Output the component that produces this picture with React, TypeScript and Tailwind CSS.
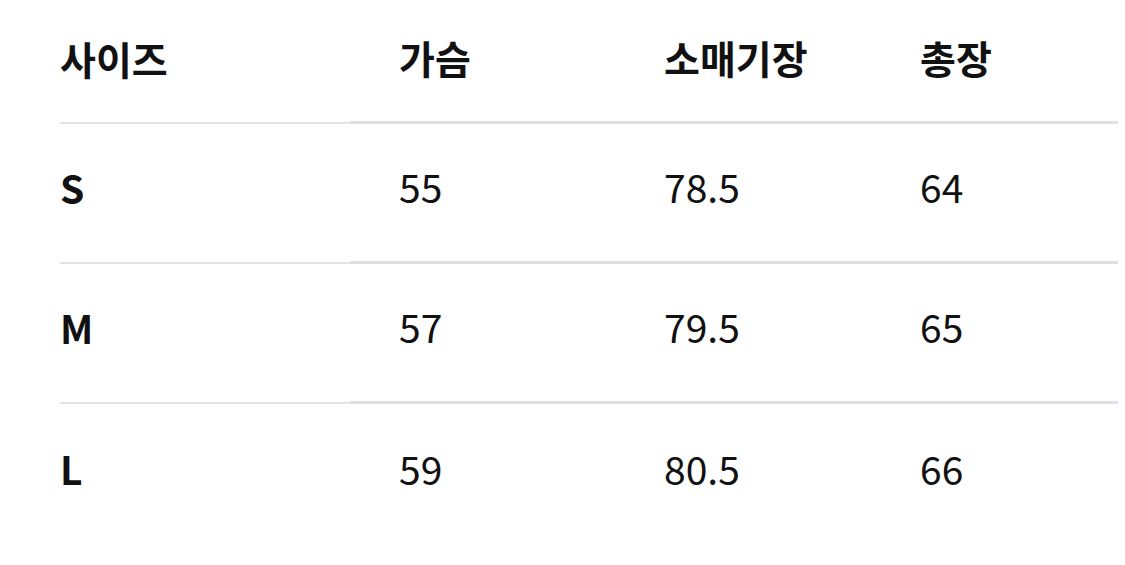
const headers = ['사이즈', '가슴', '소매기장', '총장'];

const rows = [
  ['S', '55', '78.5', '64'],
  ['M', '57', '79.5', '65'],
  ['L', '59', '80.5', '66'],
];

// widths of the three measurement columns
const colWidths = ['w-[265px]', 'w-[256px]', 'w-[247px]'];

function Row({ cells, header, last }: { cells: string[]; header?: boolean; last?: boolean }) {
  const height = header ? 'h-[124px] pb-[6px]' : 'h-[140px] pb-[12px]';
  return (
    <div className="flex items-start">
      <div
        className={`w-[290px] flex items-center ${height} ${
          last ? '' : 'border-b-2 border-[#e3e3e3]'
        }`}
      >
        <span className="text-[39px] font-bold">{cells[0]}</span>
      </div>
      {cells.slice(1).map((c, i) => (
        <div
          key={i}
          className={`${colWidths[i]} pl-[49px] flex items-center ${height} ${
            last ? '' : 'border-b-[3px] border-[#dde1e5]'
          }`}
        >
          <span className={header ? 'text-[39px] font-bold' : 'text-[39px] font-normal'}>{c}</span>
        </div>
      ))}
    </div>
  );
}

export default function App() {
  return (
    <div
      className="w-[1125px] h-[565px] bg-white text-[#111] pl-[60px] flex flex-col"
      style={{ fontFamily: '"Noto Sans CJK KR", "Noto Sans", sans-serif' }}
    >
      <Row cells={headers} header />
      {rows.map((r, i) => (
        <Row key={r[0]} cells={r} last={i === rows.length - 1} />
      ))}
    </div>
  );
}
